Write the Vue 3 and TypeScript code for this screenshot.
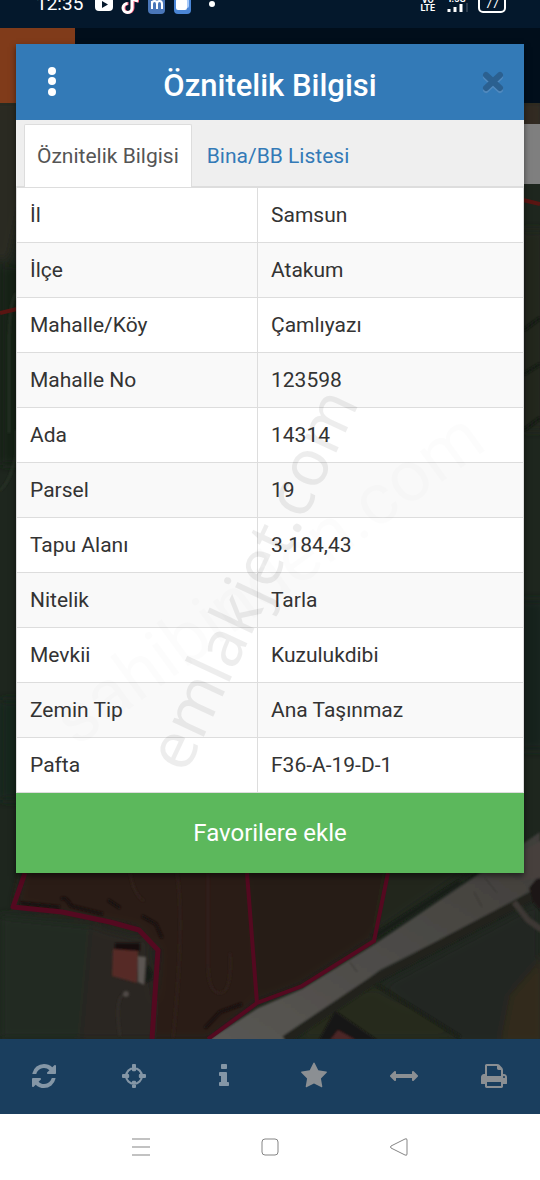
<script setup lang="ts">
import { ref } from 'vue'

interface Row {
  label: string
  value: string
}

interface Tool {
  name: string
  path: string
}

const rows: Row[] = [
  { label: 'İl', value: 'Samsun' },
  { label: 'İlçe', value: 'Atakum' },
  { label: 'Mahalle/Köy', value: 'Çamlıyazı' },
  { label: 'Mahalle No', value: '123598' },
  { label: 'Ada', value: '14314' },
  { label: 'Parsel', value: '19' },
  { label: 'Tapu Alanı', value: '3.184,43' },
  { label: 'Nitelik', value: 'Tarla' },
  { label: 'Mevkii', value: 'Kuzulukdibi' },
  { label: 'Zemin Tip', value: 'Ana Taşınmaz' },
  { label: 'Pafta', value: 'F36-A-19-D-1' },
]

const tabs: string[] = ['Öznitelik Bilgisi', 'Bina/BB Listesi']
const activeTab = ref(0)

const tools: Tool[] = [
  {
    name: 'Yenile',
    path: 'M1639 1056q0 5-1 7-64 268-268 434.500t-478 166.500q-146 0-282.500-55t-243.500-157l-129 129q-19 19-45 19t-45-19-19-45v-448q0-26 19-45t45-19h448q26 0 45 19t19 45-19 45l-137 137q71 66 161 102t187 36q134 0 250-65t186-179q11-17 53-117 8-23 30-23h192q13 0 22.500 9.500t9.500 22.500zm25-800v448q0 26-19 45t-45 19h-448q-26 0-45-19t-19-45 19-45l138-138q-148-137-349-137-134 0-250 65t-186 179q-11 17-53 117-8 23-30 23h-199q-13 0-22.500-9.500t-9.500-22.500v-7q65-268 270-434.500t480-166.500q146 0 284 55.500t245 156.500l130-129q19-19 45-19t45 19 19 45z',
  },
  {
    name: 'Konum',
    path: 'M896 320a576 576 0 1 1 0 1152a576 576 0 1 1 0-1152zM896 464a432 432 0 1 0 0 864a432 432 0 1 0 0-864zM832 128h128q64 0 64 64v330q0 64-64 64h-128q-64 0-64-64v-330q0-64 64-64zM832 1206h128q64 0 64 64v330q0 64-64 64h-128q-64 0-64-64v-330q0-64 64-64zM192 768h330q64 0 64 64v128q0 64-64 64h-330q-64 0-64-64v-128q0-64 64-64zM1270 768h330q64 0 64 64v128q0 64-64 64h-330q-64 0-64-64v-128q0-64 64-64z',
  },
  {
    name: 'Bilgi',
    path: 'M1216 1344v128q0 26-19 45t-45 19h-512q-26 0-45-19t-19-45v-128q0-26 19-45t45-19h64v-384h-64q-26 0-45-19t-19-45v-128q0-26 19-45t45-19h384q26 0 45 19t19 45v576h64q26 0 45 19t19 45zm-128-1152v192q0 26-19 45t-45 19h-256q-26 0-45-19t-19-45v-192q0-26 19-45t45-19h256q26 0 45 19t19 45z',
  },
  {
    name: 'Favoriler',
    path: 'M1728 647q0 22-26 48l-363 354 86 500q1 7 1 20 0 21-10.500 35.500t-30.500 14.500q-19 0-40-12l-449-236-449 236q-22 12-40 12-21 0-31.500-14.500t-10.500-35.500q0-6 2-20l86-500-364-354q-25-27-25-48 0-37 56-46l502-73 225-455q19-41 49-41t49 41l225 455 502 73q56 9 56 46z',
  },
  {
    name: 'Ölçüm',
    path: 'M1792 896q0 26-19 45l-256 256q-19 19-45 19t-45-19-19-45v-128h-1024v128q0 26-19 45t-45 19-45-19l-256-256q-19-19-19-45t19-45l256-256q19-19 45-19t45 19 19 45v128h1024v-128q0-26 19-45t45-19 45 19l256 256q19 19 19 45z',
  },
  {
    name: 'Yazdır',
    path: 'M448 1536h896v-256h-896v256zm0-640h896v-384h-160q-40 0-68-28t-28-68v-160h-640v640zm1152 64q0-26-19-45t-45-19-45 19-19 45 19 45 45 19 45-19 19-45zm128 0v416q0 13-9.500 22.500t-22.500 9.500h-224v160q0 40-28 68t-68 28h-960q-40 0-68-28t-28-68v-160h-224q-13 0-22.500-9.500t-9.500-22.500v-416q0-79 56.500-135.500t135.500-56.500h64v-544q0-40 28-68t68-28h672q40 0 88 20t76 48l152 152q28 28 48 76t20 88v256h64q79 0 135.500 56.500t56.500 135.500z',
  },
]
</script>

<template>
  <div class="phone">
    <header class="status">
      <div class="status-row">
        <span class="clock">12:35</span>
        <svg class="apps" viewBox="0 0 130 28" width="130" height="28" aria-hidden="true">
          <rect x="0" y="7" width="18" height="14" rx="4" fill="#fff" />
          <path d="M7 11l6 3.500-6 3.500z" fill="#05182b" />
          <path d="M38 5v13a4.500 4.500 0 1 1-4.500-4.500M38 6q1 5 6 5" fill="none" stroke="#ff5a78" stroke-width="3" />
          <path d="M37 5v13a4.500 4.500 0 1 1-4.500-4.500M37 6q1 4 6 5" fill="none" stroke="#fff" stroke-width="3" />
          <rect x="53" y="6" width="17" height="18" rx="4" fill="#4a76b8" />
          <path d="M57 19v-8m0 3q0-3 2.500-3t2.500 3v5m0-5q0-3 2.500-3t2.500 3v5" fill="none" stroke="#fff" stroke-width="2" />
          <rect x="79" y="6" width="17" height="18" rx="4" fill="#4b86d6" />
          <rect x="83" y="7" width="11" height="11" rx="2" fill="#a9cbfa" />
          <rect x="81" y="9" width="11" height="11" rx="2" fill="#fff" />
          <circle cx="117" cy="14" r="3" fill="#fff" />
        </svg>
        <span class="spacer"></span>
        <span class="volte"><span>VO</span><span>LTE</span></span>
        <span class="signal">
          <span>4.5G</span>
          <svg viewBox="0 0 26 10" width="26" height="10" aria-hidden="true">
            <path d="M6 9V6M12 9V4M18 9V1" stroke="#fff" stroke-width="3" />
            <path d="M24 9V0" stroke="#2b3b4c" stroke-width="2" />
          </svg>
        </span>
        <span class="battery">77</span>
      </div>
    </header>

    <main class="app">
      <div class="backdrop">
        <div class="appbar"><div class="brand"></div></div>
        <div class="map">
          <svg viewBox="0 103 540 936" preserveAspectRatio="xMidYMid slice" aria-hidden="true">
            <defs>
              <filter id="soft" x="-20%" y="-20%" width="140%" height="140%"><feGaussianBlur stdDeviation="5" /></filter>
              <filter id="edge"><feGaussianBlur stdDeviation="1" /></filter>
              <linearGradient id="road" x1="0" y1="1" x2="1" y2="0">
                <stop offset="0" stop-color="#595754" />
                <stop offset="1" stop-color="#403e3a" />
              </linearGradient>
            </defs>
            <rect y="103" width="540" height="936" fill="#1e261e" />
            <g filter="url(#soft)">
              <path d="M-10 100H30V170L10 260H-10z" fill="#2b2923" />
              <path d="M0 265h30v200H0z" fill="#172018" />
              <path d="M0 700h30v100H0z" fill="#19281b" />
              <path d="M515 100h30v70h-30z" fill="#302c23" />
              <path d="M520 230h25v200h-25z" fill="#24261e" />
              <path d="M520 600h25v150h-25z" fill="#17211b" />
              <path d="M0 915l100 10 30 114H0z" fill="#212920" />
              <path d="M90 925l60 15 8 100H80z" fill="#2a2524" />
              <path d="M25 860H248L257 1003 210 1040H153L158 950 135 928 15 905z" fill="#291d17" />
              <path d="M248 860H388L374 940 300 987 257 1003z" fill="#271a17" />
              <path d="M388 860H485L374 935z" fill="#20281f" />
              <path d="M380 985L540 900V1045H460z" fill="#242820" />
              <path d="M510 995L545 955V1045H500z" fill="#30291e" />
              <path d="M310 1000L375 985 460 1040H300z" fill="#252b1f" />
            </g>
            <g filter="url(#edge)">
              <path d="M205 1042L258 1008 302 989 375 944 470 880 540 832V886L470 925 380 970 285 1042z" fill="url(#road)" />
              <path d="M285 1040L380 976 540 892" fill="none" stroke="#20231b" stroke-width="9" />
              <path d="M375 936L460 882" fill="none" stroke="#191f18" stroke-width="5" />
              <path d="M375 984L460 1037" fill="none" stroke="#1a2019" stroke-width="3" />
              <path d="M474 892l8 15M485 878l12 15M350 962l7 10" stroke="#35332f" stroke-width="1" />
              <path d="M319 1040l16-29 42 29z" fill="#191415" />
              <path d="M330 1040l8-10 18 10z" fill="#4b2525" />
              <path d="M524 894l5-6 4 14 13 15v-50z" fill="#1d1919" />
              <path d="M514 902l14 18 14 10" stroke="#3c3834" stroke-width="6" fill="none" />
              <path d="M525 850l18-10v38l-20 2z" fill="#47413e" />
              <path d="M115 943h25v8h-25z" fill="#130e0d" />
              <path d="M113 949l25 2-1 32-25-7z" fill="#572b25" />
              <path d="M138 956l8 1-2 28-6-3z" fill="#5c5753" />
              <path d="M147 965q6 6 5 14l-7 4" fill="#121a16" />
              <path d="M120 1036q-6-42 6-42" fill="none" stroke="#332f2c" stroke-width="2" />
              <circle cx="126" cy="994" r="3" fill="#504a46" />
              <path d="M20 903l40 4M61 899q5-3 10 7l32 8M108 900l12 8M142 916l14 8 6 14M205 1028l15-16 22-8" fill="none" stroke="#190f0d" stroke-width="3" />
              <path d="M130 873q4 22 14 28M177 873q8 50-4 165M208 873v90q0 30 12 30t10-40" fill="none" stroke="#30241d" stroke-width="2" />
              <path d="M16 293q-7 12-7 50v90M16 430v25q-6 28-16 35" fill="none" stroke="#293326" stroke-width="2" />
              <path d="M524 330l16-12M524 374l16-10M524 430l16-12" fill="none" stroke="#141b14" stroke-width="3" />
            </g>
            <path d="M0 313L17 309M523 200L540 204" stroke="#5a1512" stroke-width="4" />
            <path d="M25 873L13 907 62 912 110 922 139 930 158 950 152 1039" fill="none" stroke="#540920" stroke-width="5" stroke-linejoin="round" />
            <path d="M247 873L257 1003M208 1039L257 1003 302 986 374 941 388 873" fill="none" stroke="#540920" stroke-width="4" />
          </svg>
          <div class="map-control"></div>
        </div>
        <nav class="toolbar" aria-label="Harita araçları">
          <button v-for="tool in tools" :key="tool.name" type="button" :aria-label="tool.name">
            <svg viewBox="0 0 1792 1792" width="28" height="28" aria-hidden="true">
              <path :d="tool.path" />
            </svg>
          </button>
        </nav>
      </div>

      <section class="dialog" role="dialog" aria-labelledby="dialog-title">
        <header class="dialog-head">
          <button type="button" class="head-btn" aria-label="Menü">
            <svg viewBox="0 0 10 32" width="10" height="32" aria-hidden="true">
              <circle cx="5" cy="5" r="4" /><circle cx="5" cy="15" r="4" /><circle cx="5" cy="26" r="4" />
            </svg>
          </button>
          <h1 id="dialog-title">Öznitelik Bilgisi</h1>
          <button type="button" class="head-btn close" aria-label="Kapat">
            <svg viewBox="0 0 24 24" width="24" height="24" aria-hidden="true">
              <path d="M5 7L19 20M19 7L5 20" stroke="#5089be" stroke-width="6" stroke-linecap="round" />
              <path d="M5 5L19 18M19 5L5 18" stroke="#2b6090" stroke-width="6" stroke-linecap="round" />
            </svg>
          </button>
        </header>
        <div class="tabs" role="tablist">
          <button
            v-for="(tab, i) in tabs"
            :key="tab"
            type="button"
            role="tab"
            :aria-selected="i === activeTab"
            :class="['tab', { active: i === activeTab }]"
            @click="activeTab = i"
          >{{ tab }}</button>
        </div>
        <table>
          <tbody>
            <tr v-for="row in rows" :key="row.label">
              <th scope="row">{{ row.label }}</th>
              <td>{{ row.value }}</td>
            </tr>
          </tbody>
        </table>
        <button type="button" class="favorite">Favorilere ekle</button>
        <svg class="watermark" viewBox="0 0 508 829" aria-hidden="true">
          <text class="mark-main" transform="translate(170 731) rotate(-65)">emlakjet.com</text>
          <text class="mark-faint" transform="translate(60 704) rotate(-36)">sahibinden.com</text>
        </svg>
      </section>
    </main>

    <nav class="system-nav" aria-label="Sistem">
      <button type="button" aria-label="Son uygulamalar">
        <svg viewBox="0 0 20 20" width="20" height="20"><path d="M1 2h18M1 10h18M1 18h18" /></svg>
      </button>
      <button type="button" aria-label="Ana ekran">
        <svg viewBox="0 0 20 20" width="20" height="20"><rect x="2" y="2" width="16" height="16" rx="3" /></svg>
      </button>
      <button type="button" aria-label="Geri">
        <svg viewBox="0 0 20 20" width="20" height="20"><path d="M2 9L16 2q2-1 2 1v14q0 2-2 1L2 11q-1-1 0-2z" /></svg>
      </button>
    </nav>
  </div>
</template>

<style>
body {
  margin: 0;
}
</style>

<style scoped>
.phone {
  display: flex;
  flex-direction: column;
  min-height: 100vh;
  overflow: hidden;
  background: #fff;
  color: #333;
  font-family: Roboto, "Liberation Sans", sans-serif;
  font-size: 21px;
  line-height: 24px;
}
button {
  margin: 0;
  padding: 0;
  border: 0;
  background: none;
  color: inherit;
  font: inherit;
  cursor: pointer;
}
svg {
  display: block;
}
.status {
  height: 28px;
  overflow: hidden;
  background: #04182c;
  color: #fff;
}
.status-row {
  display: flex;
  align-items: center;
  height: 28px;
  margin-top: -10px;
  padding: 0 34px 0 36px;
}
.clock {
  font-size: 19px;
}
.apps {
  margin-left: 12px;
}
.spacer {
  flex: 1;
}
.volte {
  display: flex;
  flex-direction: column;
  align-items: center;
  font-size: 9px;
  font-weight: 700;
  line-height: 8px;
}
.signal {
  display: flex;
  flex-direction: column;
  margin: 0 9px 0 8px;
  font-size: 9px;
  font-weight: 700;
  line-height: 8px;
  text-align: center;
}
.battery {
  box-sizing: border-box;
  width: 28px;
  height: 18px;
  border: 2px solid #fff;
  border-radius: 5px;
  font-size: 12px;
  line-height: 15px;
  text-align: center;
}
.app {
  display: grid;
  flex: 1;
}
.backdrop,
.dialog {
  grid-area: 1 / 1;
}
.backdrop {
  display: flex;
  flex-direction: column;
}
.appbar {
  height: 75px;
  background: #010e1b;
}
.brand {
  width: 75px;
  height: 75px;
  background: #803b1a;
}
.map {
  position: relative;
  flex: 1;
  overflow: hidden;
}
.map > svg {
  position: absolute;
  inset: 0;
  width: 100%;
  height: 100%;
}
.map-control {
  position: absolute;
  top: 21px;
  right: 0;
  width: 60px;
  height: 60px;
  background: #7f7f7f;
}
.toolbar {
  display: grid;
  grid-template-columns: repeat(6, 1fr);
  height: 75px;
  background: #1a3e5e;
}
.toolbar button {
  display: grid;
  place-items: center;
  padding: 0 3px 2px 0;
  fill: #8496a6;
}
.toolbar button:nth-child(n + 4) {
  fill: #8b8f93;
}
.dialog {
  position: relative;
  align-self: start;
  margin: 16px 16px 0;
  background: #fff;
  box-shadow: 0 3px 6px rgba(0, 0, 0, 0.5);
}
.dialog-head {
  display: flex;
  align-items: center;
  height: 76px;
  padding: 0 16px;
  background: #337ab7;
  color: #fff;
}
.head-btn {
  display: grid;
  place-items: center;
  width: 40px;
  height: 40px;
  fill: #fff;
}
.close {
  width: 30px;
}
h1 {
  flex: 1;
  margin: 0;
  padding: 8px 10px 0 0;
  font-size: 31px;
  font-weight: 500;
  line-height: 36px;
  text-align: center;
}
.tabs {
  display: flex;
  gap: 2px;
  height: 67px;
  padding: 4px 8px 0;
  border-bottom: 1px solid #ddd;
  background: #efefef;
  box-sizing: border-box;
}
.tab {
  height: 62px;
  padding: 0 12px;
  border: 1px solid transparent;
  border-bottom: 0;
  color: #337ab7;
  white-space: nowrap;
}
.tab.active {
  height: 63px;
  border-color: #ddd;
  border-radius: 2px 2px 0 0;
  background: #fff;
  color: #555;
}
table {
  width: 100%;
  border-collapse: collapse;
}
th,
td {
  height: 54px;
  padding: 0 13px;
  border: 1px solid #ddd;
  font-weight: 400;
  text-align: left;
}
th {
  width: 214px;
}
tr:nth-child(even) {
  background: #f9f9f9;
}
.favorite {
  display: block;
  width: 100%;
  height: 80px;
  background: #5cb85c;
  color: #fff;
  font-size: 24px;
}
.watermark {
  position: absolute;
  inset: 0;
  width: 100%;
  height: 100%;
  pointer-events: none;
}
.mark-main {
  fill: rgba(0, 0, 0, 0.07);
  font-family: "Noto Sans", "Open Sans", sans-serif;
  font-size: 65px;
}
.mark-faint {
  fill: rgba(0, 0, 0, 0.01);
  font-family: Roboto, sans-serif;
  font-size: 72px;
}
.system-nav {
  display: flex;
  align-items: center;
  justify-content: center;
  gap: 109px;
  height: 66px;
  background: #fff;
}
.system-nav svg {
  fill: none;
  stroke: #858585;
  stroke-width: 1;
}
</style>
